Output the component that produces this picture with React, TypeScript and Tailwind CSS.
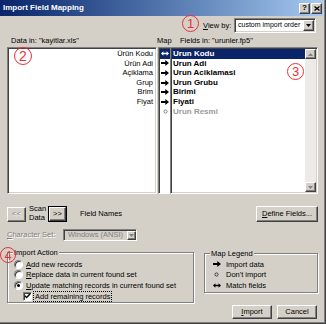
import React from "react";

const raised =
  "border border-t-white border-l-white border-r-[#404040] border-b-[#404040] shadow-[inset_-1px_-1px_0_#808080] bg-[#d4d0c8]";
const sunken =
  "border border-t-[#808080] border-l-[#808080] border-r-white border-b-white shadow-[inset_1px_1px_0_#404040,inset_-1px_-1px_0_#d4d0c8]";
const etched =
  "border border-t-[#808080] border-l-[#808080] border-r-[#808080] border-b-[#808080] shadow-[inset_1px_1px_0_#ffffff,1px_1px_0_#ffffff]";

function Arrow({ color = "#000" }: { color?: string }) {
  return (
    <svg width="8" height="6" viewBox="0 0 8 6">
      <path d="M0 2h4.3V0L8 3 4.3 6V4H0z" fill={color} />
    </svg>
  );
}

function DoubleArrow({ color = "#000" }: { color?: string }) {
  return (
    <svg width="8" height="5" viewBox="0 0 8 5">
      <path d="M0 2.5L2.4 0.2V1.8h3.2V0.2L8 2.5 5.6 4.8V3.2H2.4v1.6z" fill={color} />
    </svg>
  );
}

function Ring({ color = "#404040" }: { color?: string }) {
  return (
    <svg width="5" height="5" viewBox="0 0 5 5">
      <circle cx="2.5" cy="2.5" r="1.6" fill="none" stroke={color} strokeWidth="1" />
    </svg>
  );
}

function Tri({ color = "#000", up = false }: { color?: string; up?: boolean }) {
  return (
    <svg width="5" height="3" viewBox="0 0 5 3">
      <path d={up ? "M0 3h5L2.5 0z" : "M0 0h5L2.5 3z"} fill={color} />
    </svg>
  );
}

function Mark({ n, className }: { n: string; className: string }) {
  return (
    <div
      className={`absolute rounded-full border border-[#e8303a] text-[#e8303a] flex items-center justify-center font-['Liberation_Sans',Arial,sans-serif] leading-none ${className}`}
    >
      {n}
    </div>
  );
}

function Radio({ checked = false }: { checked?: boolean }) {
  return (
    <div className="w-[9px] h-[9px] rounded-full bg-white border border-t-[#808080] border-l-[#808080] border-r-white border-b-white shadow-[inset_1px_1px_0_#404040] flex items-center justify-center">
      {checked && <div className="w-[3px] h-[3px] rounded-full bg-black" />}
    </div>
  );
}

export default function App() {
  const leftItems = ["Ürün Kodu", "Ürün Adi", "Açiklama", "Grup", "Brim", "Fiyat"];
  const rightItems = ["Urun Kodu", "Urun Adi", "Urun Aciklamasi", "Urun Grubu", "Birimi", "Fiyati"];
  return (
    <div className="relative w-[326px] h-[324px] bg-[#d4d0c8] overflow-hidden whitespace-nowrap text-[7.5px] text-black font-['Liberation_Sans',Arial,sans-serif] shadow-[inset_-1px_-1px_0_#404040,inset_-2px_-2px_0_#808080]">
      {/* Title bar */}
      <div className="w-[323px] h-[16px] flex items-center justify-between bg-linear-to-r from-[#0a246a] to-[#a6caf0]">
        <span className="pl-[3px] text-white font-bold text-[8px] leading-none">Import Field Mapping</span>
        <div className="flex gap-[1px] pr-[1px]">
          <div className={`${raised} w-[11px] h-[11px] flex items-center justify-center text-[8px] font-bold leading-none`}>?</div>
          <div className={`${raised} w-[11px] h-[11px] flex items-center justify-center`}>
            <svg width="6" height="5" viewBox="0 0 6 5">
              <path d="M0.5 0.5L5.5 4.5M5.5 0.5L0.5 4.5" stroke="#000" strokeWidth="1.3" />
            </svg>
          </div>
        </div>
      </div>

      {/* View by */}
      <div className="flex items-center h-[15px] mt-[2px] ml-[203px]">
        <span className="w-[31px]">
          <span className="underline">V</span>iew by:
        </span>
        <div className={`${sunken} bg-white w-[82px] h-[15px] flex items-center justify-between overflow-hidden`}>
          <span className="pl-[3px] text-[7px]">custom import order</span>
          <div className={`${raised} shrink-0 w-[11px] h-[11px] mr-[1px] flex items-center justify-center`}>
            <Tri />
          </div>
        </div>
      </div>

      {/* Labels */}
      <div className="mt-[2px] h-[11px] flex items-center">
        <span className="w-[157px] pl-[11px]">Data in: "kayitlar.xls"</span>
        <span className="w-[23px]">Map</span>
        <span>Fields in: "urunler.fp5"</span>
      </div>

      {/* Lists */}
      <div className="mt-[1px] ml-[7px] flex h-[147px]">
        <div className={`${sunken} bg-white w-[150px] flex flex-col items-end pr-[3px] pt-[1px]`}>
          {leftItems.map((t) => (
            <div key={t} className="h-[9.6px] leading-[9.6px]">
              {t}
            </div>
          ))}
        </div>
        <div className="ml-[1px] w-[12px] flex flex-col bg-white border-l border-l-[#808080] shadow-[inset_1px_1px_0_#404040] border-t border-t-[#808080] border-b border-b-white pt-[1px] pl-[1px]">
          <div className="h-[9.6px] bg-[#0a246a] flex items-center justify-center">
            <DoubleArrow color="#ffffff" />
          </div>
          {rightItems.slice(1).map((t) => (
            <div key={t} className="h-[9.6px] flex items-center justify-center">
              <Arrow />
            </div>
          ))}
          <div className="h-[9.6px] flex items-center justify-center">
            <Ring color="#808080" />
          </div>
        </div>
        <div className={`${sunken} bg-white w-[148px] flex`}>
          <div className="flex-1 flex flex-col pt-[1px] pl-[1px] text-[8px] font-bold">
            <div className="h-[9.6px] leading-[9.6px] bg-[#0a246a] text-white pl-[1px]">Urun Kodu</div>
            {rightItems.slice(1).map((t) => (
              <div key={t} className="h-[9.6px] leading-[9.6px] pl-[1px]">
                {t}
              </div>
            ))}
            <div className="h-[9.6px] leading-[9.6px] pl-[1px] text-[#9a9a9a]">Urun Resmi</div>
          </div>
          <div className="w-[11px] flex flex-col bg-[#ecebe7] mt-[1px] mb-[1px] mr-[1px]">
            <div className={`${raised} h-[10px] flex items-center justify-center`}>
              <Tri up color="#808080" />
            </div>
            <div className="flex-1" />
            <div className={`${raised} h-[10px] flex items-center justify-center`}>
              <Tri color="#808080" />
            </div>
          </div>
        </div>
      </div>

      {/* Scan row */}
      <div className="mt-[12px] ml-[7px] w-[311px] h-[16px] flex items-center">
        <div className={`${raised} w-[19px] h-[15px] flex items-center justify-center text-[#808080] [text-shadow:1px_1px_0_#ffffff]`}>
          &lt;&lt;
        </div>
        <div className="ml-[3px] w-[19px] flex flex-col leading-[8.6px]">
          <span>Scan</span>
          <span>Data</span>
        </div>
        <div className="w-[19px] h-[16px] border border-black">
          <div className={`${raised} w-full h-full flex items-center justify-center`}>&gt;&gt;</div>
        </div>
        <span className="ml-[13px]">Field Names</span>
        <div className={`${raised} ml-auto w-[62px] h-[16px] flex items-center justify-center`}>
          <span>
            <span className="underline">D</span>efine Fields...
          </span>
        </div>
      </div>

      {/* Character set */}
      <div className="mt-[7px] ml-[7px] h-[12px] flex items-center">
        <span className="w-[56px] text-[#808080] [text-shadow:1px_1px_0_#ffffff]">
          <span className="underline">C</span>haracter Set:
        </span>
        <div className={`${sunken} w-[74px] h-[12px] flex items-center justify-between`}>
          <span className="pl-[4px] text-[#808080]">Windows (ANSI)</span>
          <div className={`${raised} w-[9px] h-[9px] flex items-center justify-center`}>
            <Tri color="#808080" />
          </div>
        </div>
      </div>

      {/* Bottom */}
      <div className="mt-[11px] ml-[7px] flex">
        <div className={`${etched} relative w-[187px] h-[51px] pt-[6px] pl-[6px]`}>
          <span className="absolute -top-[5px] left-[5px] px-[1px] bg-[#d4d0c8] leading-[9px]">Import Action</span>
          <div className="h-[10.5px] flex items-center gap-[3px]">
            <Radio />
            <span>
              <span className="underline">A</span>dd new records
            </span>
          </div>
          <div className="h-[10.5px] flex items-center gap-[3px]">
            <Radio />
            <span>
              <span className="underline">R</span>eplace data in current found set
            </span>
          </div>
          <div className="h-[10.5px] flex items-center gap-[3px]">
            <Radio checked />
            <span>
              <span className="underline">U</span>pdate matching records in current found set
            </span>
          </div>
          <div className="h-[11px] flex items-center pl-[9px] gap-[1px]">
            <div className="w-[9px] h-[9px] bg-white border border-t-[#808080] border-l-[#808080] border-r-white border-b-white shadow-[inset_1px_1px_0_#404040] flex items-center justify-center">
              <svg width="7" height="6" viewBox="0 0 7 6">
                <path d="M0.8 2.8L2.6 4.6L6.2 0.8" fill="none" stroke="#000" strokeWidth="1.4" />
              </svg>
            </div>
            <span className="border border-dotted border-black px-[1px] leading-[9px]">Add remaining records</span>
          </div>
        </div>

        <div className="ml-[10px] w-[114px] mt-[1px] flex flex-col">
          <div className={`${etched} relative h-[40px] pt-[5px] pl-[8px]`}>
            <span className="absolute -top-[5px] left-[5px] px-[1px] bg-[#d4d0c8] leading-[9px]">Map Legend</span>
            <div className="h-[10.5px] flex items-center">
              <span className="w-[13px] flex items-center">
                <Arrow />
              </span>
              <span>Import data</span>
            </div>
            <div className="h-[10.5px] flex items-center">
              <span className="w-[13px] flex items-center pl-[1px]">
                <Ring />
              </span>
              <span>Don't import</span>
            </div>
            <div className="h-[10.5px] flex items-center">
              <span className="w-[13px] flex items-center">
                <DoubleArrow />
              </span>
              <span>Match fields</span>
            </div>
          </div>
          <div className="mt-[12px] flex justify-end gap-[5px] pr-[1px]">
            <div className={`${raised} w-[40px] h-[14px] flex items-center justify-center`}>
              <span>
                <span className="underline">I</span>mport
              </span>
            </div>
            <div className={`${raised} w-[40px] h-[14px] flex items-center justify-center`}>Cancel</div>
          </div>
        </div>
      </div>

      {/* Annotation marks */}
      <Mark n="1" className="left-[182px] top-[15px] w-[17px] h-[17px] text-[13px]" />
      <Mark n="2" className="left-[14px] top-[47px] w-[18px] h-[18px] text-[14px]" />
      <Mark n="3" className="left-[287px] top-[63px] w-[17px] h-[17px] text-[13px]" />
      <Mark n="4" className="left-[0px] top-[247px] w-[16px] h-[16px] text-[13px]" />
    </div>
  );
}
